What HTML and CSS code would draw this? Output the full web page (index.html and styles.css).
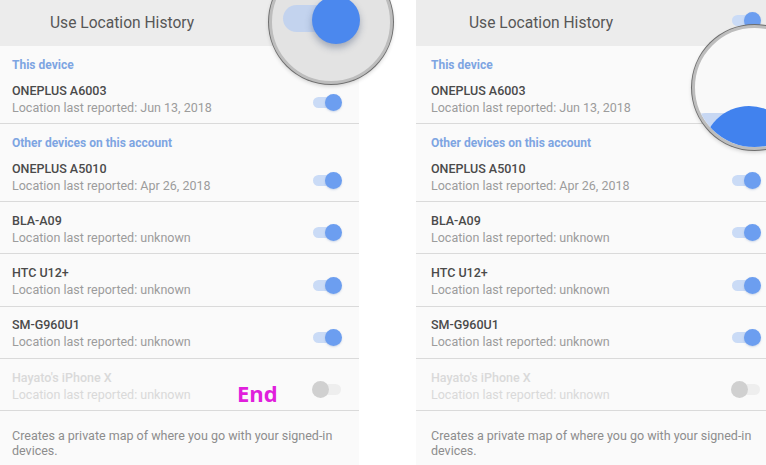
FILE: index.html
```html
<!DOCTYPE html>
<html>
<head>
<meta charset="utf-8">
<link rel="stylesheet" href="styles.css">
</head>
<body>
<div class="stage">
  <section class="panel panel-left">
    <header class="bar">
      <span class="bar-title">Use Location History</span>
      <span class="toggle on"><span class="track"></span><span class="thumb"></span></span>
    </header>
    <div class="label">This device</div>
    <div class="row first">
      <div class="txt"><div class="name">ONEPLUS A6003</div><div class="sub">Location last reported: Jun 13, 2018</div></div>
      <span class="toggle on"><span class="track"></span><span class="thumb"></span></span>
    </div>
    <div class="label">Other devices on this account</div>
    <div class="row first">
      <div class="txt"><div class="name">ONEPLUS A5010</div><div class="sub">Location last reported: Apr 26, 2018</div></div>
      <span class="toggle on"><span class="track"></span><span class="thumb"></span></span>
    </div>
    <div class="row">
      <div class="txt"><div class="name">BLA-A09</div><div class="sub">Location last reported: unknown</div></div>
      <span class="toggle on"><span class="track"></span><span class="thumb"></span></span>
    </div>
    <div class="row">
      <div class="txt"><div class="name">HTC U12+</div><div class="sub">Location last reported: unknown</div></div>
      <span class="toggle on"><span class="track"></span><span class="thumb"></span></span>
    </div>
    <div class="row">
      <div class="txt"><div class="name">SM-G960U1</div><div class="sub">Location last reported: unknown</div></div>
      <span class="toggle on"><span class="track"></span><span class="thumb"></span></span>
    </div>
    <div class="row disabled">
      <div class="txt"><div class="name">Hayato's iPhone X</div><div class="sub">Location last reported: unknown</div></div>
      <span class="toggle off"><span class="track"></span><span class="thumb"></span></span>
    </div>
    <p class="foot">Creates a private map of where you go with your signed-in devices.</p>
    <span class="end-tag">End</span>
    <div class="lens lens-a">
      <span class="lt"></span><span class="lb"></span>
    </div>
  </section>

  <section class="panel panel-right">
    <header class="bar">
      <span class="bar-title">Use Location History</span>
      <span class="toggle on"><span class="track"></span><span class="thumb"></span></span>
    </header>
    <div class="label">This device</div>
    <div class="row first">
      <div class="txt"><div class="name">ONEPLUS A6003</div><div class="sub">Location last reported: Jun 13, 2018</div></div>
      <span class="toggle on"><span class="track"></span><span class="thumb"></span></span>
    </div>
    <div class="label">Other devices on this account</div>
    <div class="row first">
      <div class="txt"><div class="name">ONEPLUS A5010</div><div class="sub">Location last reported: Apr 26, 2018</div></div>
      <span class="toggle on"><span class="track"></span><span class="thumb"></span></span>
    </div>
    <div class="row">
      <div class="txt"><div class="name">BLA-A09</div><div class="sub">Location last reported: unknown</div></div>
      <span class="toggle on"><span class="track"></span><span class="thumb"></span></span>
    </div>
    <div class="row">
      <div class="txt"><div class="name">HTC U12+</div><div class="sub">Location last reported: unknown</div></div>
      <span class="toggle on"><span class="track"></span><span class="thumb"></span></span>
    </div>
    <div class="row">
      <div class="txt"><div class="name">SM-G960U1</div><div class="sub">Location last reported: unknown</div></div>
      <span class="toggle on"><span class="track"></span><span class="thumb"></span></span>
    </div>
    <div class="row disabled">
      <div class="txt"><div class="name">Hayato's iPhone X</div><div class="sub">Location last reported: unknown</div></div>
      <span class="toggle off"><span class="track"></span><span class="thumb"></span></span>
    </div>
    <p class="foot">Creates a private map of where you go with your signed-in devices.</p>
    <div class="lens lens-b">
      <span class="rt"></span><span class="rb"></span>
    </div>
  </section>
</div>
</body>
</html>
```

FILE: styles.css
```css
html, body {
  margin: 0;
  padding: 0;
  background: #ffffff;
  width: 766px;
  height: 465px;
  overflow: hidden;
}
body {
  font-family: Roboto, "Liberation Sans", sans-serif;
}
.stage {
  display: flex;
  gap: 57px;
  margin-left: -3px;
  width: 800px;
}
.panel {
  position: relative;
  width: 362px;
  flex: none;
  height: 465px;
  background: #fafafa;
}
.bar {
  height: 46px;
  background: #ececec;
  display: flex;
  align-items: center;
  padding-left: 53px;
  padding-right: 17px;
  box-sizing: border-box;
}
.bar-title {
  flex: 1;
  font-size: 15.6px;
  color: #575757;
}
.bar .toggle { margin-top: -6px; }
.label {
  padding: 11px 0 0 15px;
  line-height: 16px;
  font-size: 12px;
  font-weight: 700;
  color: #7ea5e2;
}
.row {
  display: flex;
  align-items: center;
  padding: 9.75px 17px 7.5px 15px;
  border-bottom: 1px solid #dadada;
}
.row.first { padding-top: 8.5px; }
.txt { flex: 1; }
.name {
  font-size: 12.5px;
  line-height: 17px;
  font-weight: 500;
  color: #4a4a4a;
}
.sub {
  font-size: 12.5px;
  line-height: 17px;
  color: #9c9c9c;
}
.row .toggle { margin-top: 8px; }
.row.disabled .name,
.row.disabled .sub { color: #d9d9d9; }
.foot {
  margin: 0;
  padding: 17px 12px 0 15px;
  font-size: 12.5px;
  line-height: 15px;
  color: #8d8d8d;
}
.toggle {
  position: relative;
  width: 30px;
  height: 17px;
  flex: none;
}
.toggle .track {
  position: absolute;
  left: 1px;
  top: 3px;
  width: 26px;
  height: 11px;
  border-radius: 6px;
  background: #cadbf6;
}
.toggle .thumb {
  position: absolute;
  right: 0;
  top: 0;
  width: 17px;
  height: 17px;
  border-radius: 50%;
  background: #6c9ef0;
  box-shadow: 0 1px 2px rgba(70, 110, 180, 0.25);
}
.toggle.off .track { background: #eeeeee; left: 3px; }
.toggle.off .thumb {
  right: auto;
  left: 0;
  background: #d0d0d0;
  box-shadow: none;
}
.end-tag {
  position: absolute;
  left: 240px;
  top: 378px;
  font-family: "Open Sans", "Noto Sans", sans-serif;
  font-weight: 700;
  font-size: 22px;
  line-height: 30px;
  color: #e01fdc;
}
.lens {
  position: absolute;
  border-radius: 50%;
  box-sizing: border-box;
  border: 3px solid #bdbdbd;
  box-shadow: 0 0 0 1px #6e6e6e, 0 2px 4px rgba(0,0,0,0.2);
  overflow: hidden;
}
.lens-a {
  left: 272px;
  top: -40.5px;
  width: 124px;
  height: 124px;
  background: #e3e3e3;
}
.lens-a .lt {
  position: absolute;
  left: 11px;
  top: 42.5px;
  width: 62px;
  height: 27px;
  border-radius: 14px;
  background: #c3d3ee;
}
.lens-a .lb {
  position: absolute;
  left: 40px;
  top: 33.5px;
  width: 48px;
  height: 48px;
  border-radius: 50%;
  background: #4b88ee;
  box-shadow: 0 4px 7px rgba(40, 60, 100, 0.35);
}
.lens-b {
  left: 276px;
  top: 25px;
  width: 125px;
  height: 125px;
  background: #f9f9f9;
}
.lens-b .rt {
  position: absolute;
  left: -10px;
  top: 85px;
  width: 70px;
  height: 40px;
  border-radius: 20px;
  background: #c8d8f3;
}
.lens-b .rb {
  position: absolute;
  left: 8px;
  top: 78px;
  width: 92px;
  height: 92px;
  border-radius: 50%;
  background: #4182ee;
}
```
